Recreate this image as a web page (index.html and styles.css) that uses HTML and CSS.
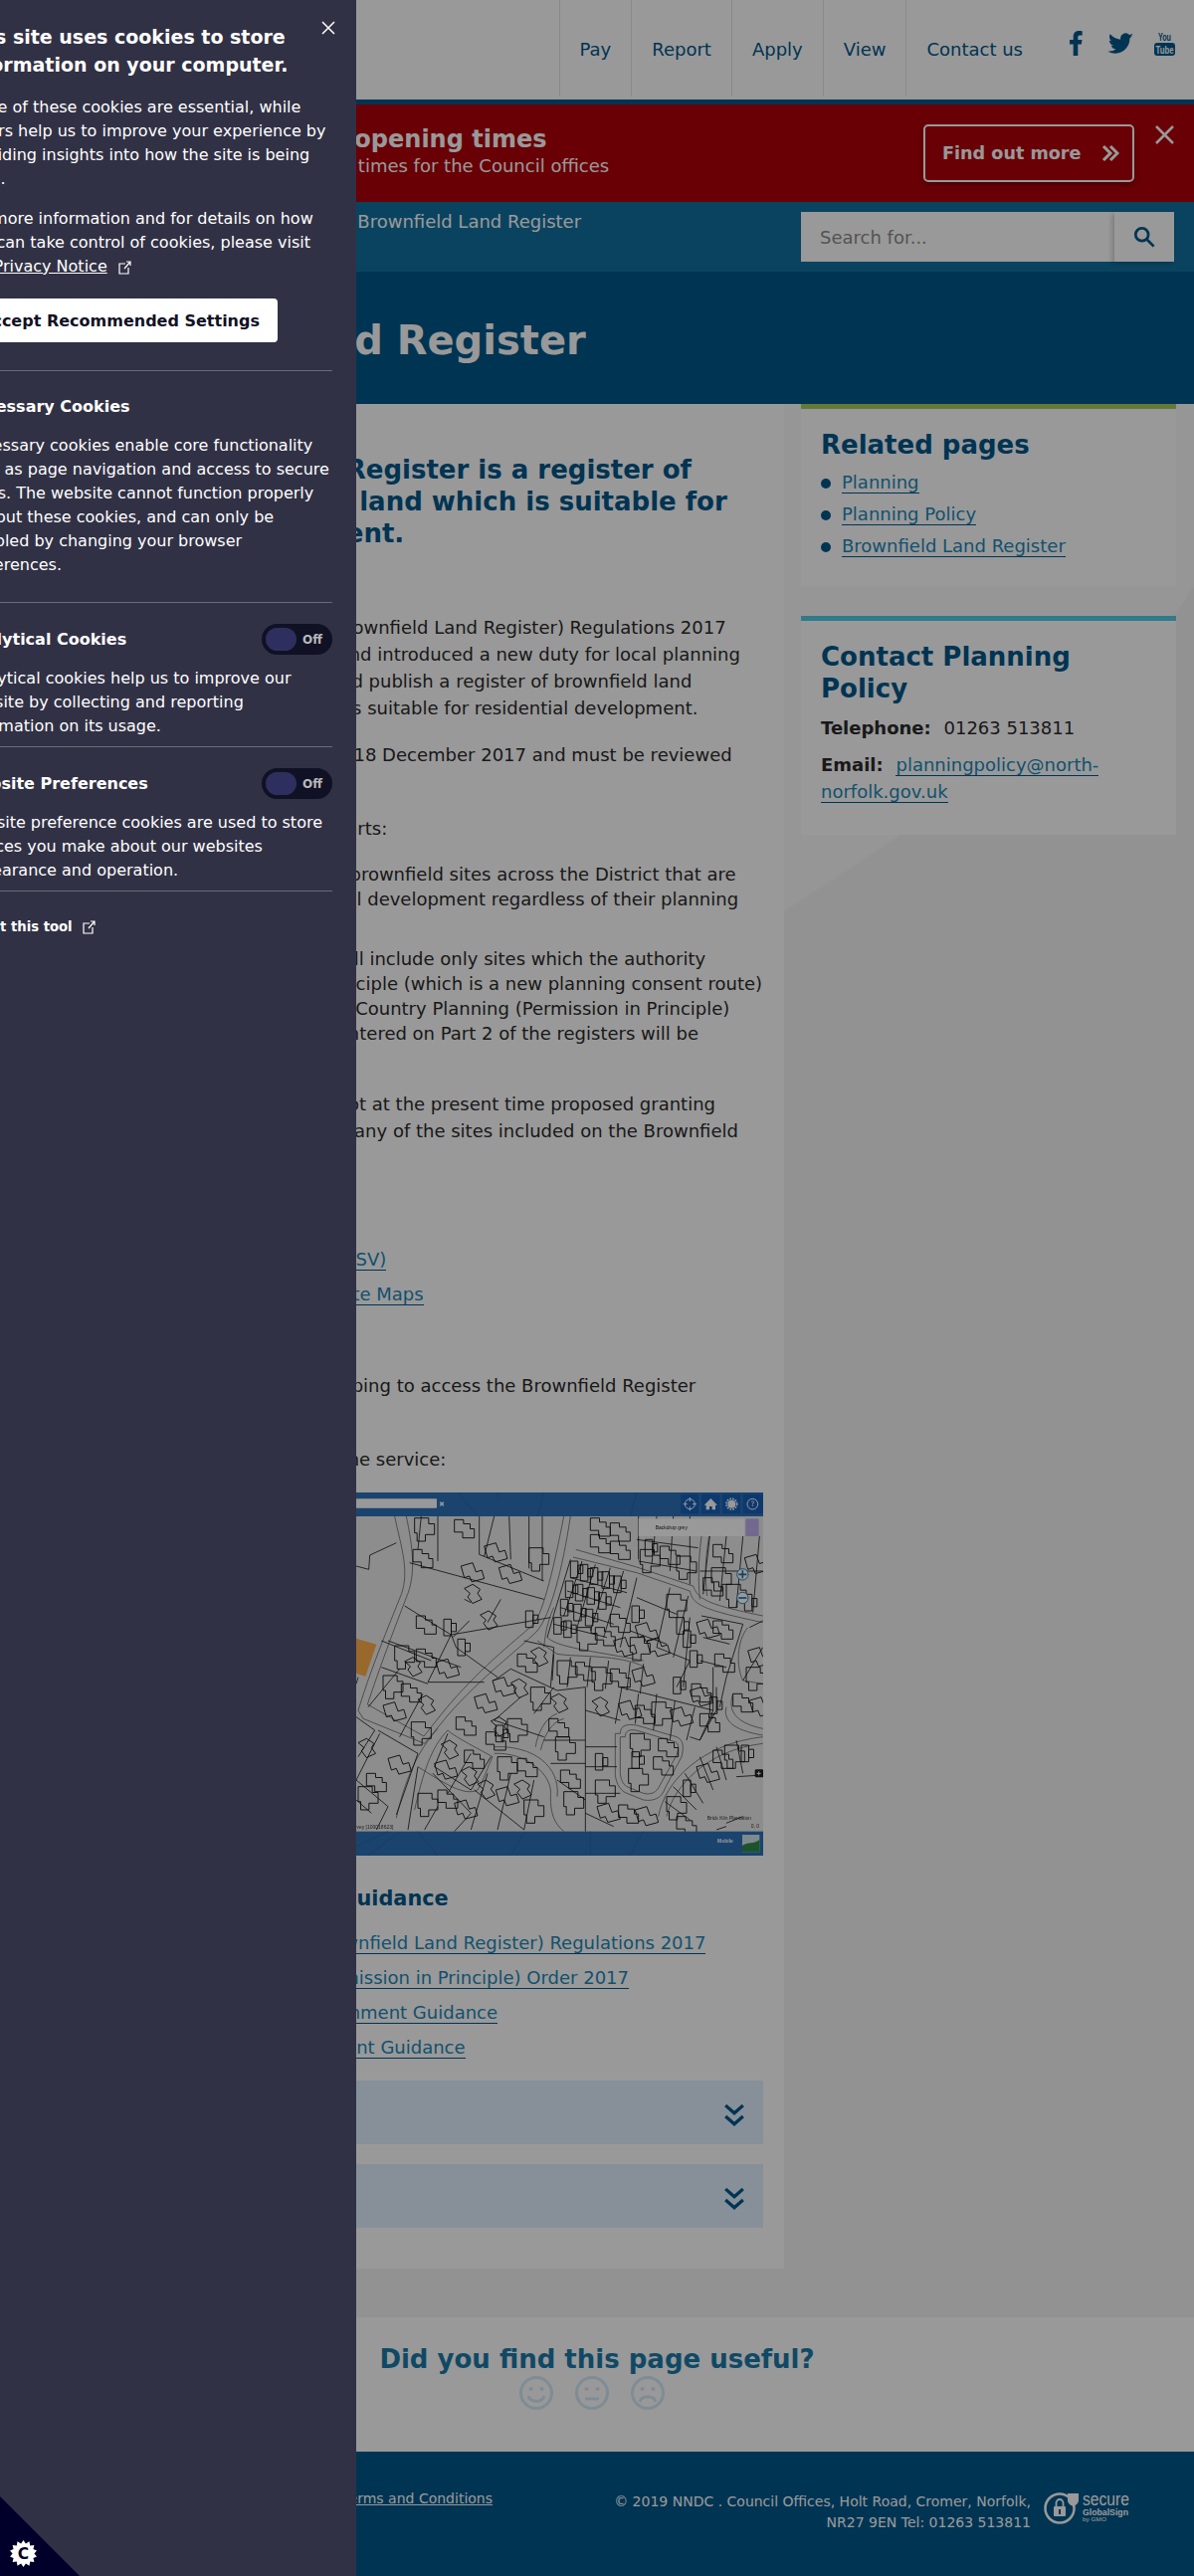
FILE: index.html
```html
<!DOCTYPE html>
<html lang="en">
<head>
<meta charset="utf-8">
<title>Brownfield Land Register</title>
<link rel="stylesheet" href="styles.css">
</head>
<body>
<div class="page">

  <header class="topbar">
    <nav class="topnav">
      <a href="#">Pay</a>
      <a href="#">Report</a>
      <a href="#">Apply</a>
      <a href="#">View</a>
      <a href="#" class="last">Contact us</a>
    </nav>
    <div class="social">
      <svg class="icon-fb" viewBox="0 0 13 25"><path d="M3.7 25V13.6H0V9h3.7V6C3.7 2 6 0 9.200 0c1.600 0 3 .1 3.500.2v4.400h-2.300c-1.800 0-2.100.9-2.100 2.100V9h4.200l-.6 4.600H8.300V25z"/></svg>
      <svg class="icon-tw" viewBox="0 0 24 20"><path d="M23.950 2.570a10 10 0 0 1-2.820.78 4.960 4.960 0 0 0 2.160-2.720c-.95.550-2 .960-3.130 1.180a4.920 4.920 0 0 0-8.380 4.480C7.690 6.100 4.070 4.130 1.640 1.160a4.820 4.820 0 0 0-.67 2.480c0 1.710.87 3.210 2.190 4.100a4.900 4.900 0 0 1-2.230-.62v.06a4.920 4.920 0 0 0 3.950 4.830 5 5 0 0 1-2.210.08 4.940 4.940 0 0 0 4.600 3.420A9.870 9.870 0 0 1 .16 17.610c-.39 0-.78-.02-1.170-.07a14 14 0 0 0 7.560 2.210c9.050 0 14-7.500 14-13.990 0-.21 0-.42-.02-.63a9.940 9.940 0 0 0 2.470-2.540z"/></svg>
      <svg class="icon-yt" viewBox="0 0 21 25">
        <text x="10.500" y="9.500" text-anchor="middle" textLength="13" lengthAdjust="spacingAndGlyphs" class="yt-you">You</text>
        <rect x="0" y="12" width="21" height="13" rx="3"/>
        <text x="10.500" y="22.500" text-anchor="middle" textLength="18" lengthAdjust="spacingAndGlyphs" class="yt-tube">Tube</text>
      </svg>
    </div>
  </header>

  <section class="alert">
    <div class="alert-text">
      <h2>Christmas opening times</h2>
      <p>Holiday opening times for the Council offices</p>
    </div>
    <a href="#" class="alert-btn">Find out more
      <svg viewBox="0 0 18 18"><path d="M2 2l7 7-7 7M9 2l7 7-7 7"/></svg>
    </a>
    <svg class="alert-close" viewBox="0 0 19 19"><path d="M1 1l17 17M18 1L1 18"/></svg>
  </section>

  <div class="crumbs">
    <div class="crumb-links">Home &gt; Planning &gt; Planning Policy &gt; Brownfield Land Register</div>
    <div class="search">
      <span class="search-ph">Search for...</span>
      <span class="search-btn">
        <svg viewBox="0 0 24 24"><circle cx="9.500" cy="9.500" r="7"/><path d="M15 15l7.500 7.500"/></svg>
      </span>
    </div>
  </div>

  <div class="titleband">
    <h1>Brownfield Land Register</h1>
  </div>

  <div class="columns">
    <main class="article">
      <h2 class="lead">The Brownfield Land Register is a register of<br>previously developed land which is suitable for<br>residential development.</h2>

      <p>The Town and Country Planning (Brownfield Land Register) Regulations 2017<br>came into force on 16 April 2017 and introduced a new duty for local planning<br>authorities to prepare, maintain and publish a register of brownfield land<br>site which the authority considers is suitable for residential development.</p>
      <p>The register was first published on 18 December 2017 and must be reviewed<br>at least once a year.</p>
      <p>This register itself splits into two parts:</p>
      <ul class="parts">
        <li>Part 1 of the register lists all the brownfield sites across the District that are<br>deemed as suitable for residential development regardless of their planning<br>status; and</li>
        <li>Part 2 of the optional registers will include only sites which the authority<br>will be granted permission in principle (which is a new planning consent route)<br>in accordance with the Town and Country Planning (Permission in Principle)<br>Order 2017. All sites which are entered on Part 2 of the registers will be<br>granted permission.</li>
      </ul>
      <p>The Council has confirmed it has not at the present time proposed granting<br>Permission in Principle in regard to any of the sites included on the Brownfield<br>Land Register.</p>

      <h3 class="sub">The Register</h3>
      <p class="linkline"><a href="#">2018-9 Brownfield Land Register (CSV)</a></p>
      <p class="linkline"><a href="#">2018-9 Brownfield Land Register Site Maps</a></p>

      <h3 class="sub">Online Map</h3>
      <p>The Council today uses online mapping to access the Brownfield Register<br>data.</p>
      <p>Please see below a screenshot of the service:</p>

      <svg class="mapshot" viewBox="-906 33 2187 1095">
        <defs>
          <path id="h1" transform="scale(1.25)" d="M0 0h34v14h14v26H26v16H6V36H0z"/>
          <path id="h2" transform="scale(1.25)" d="M0 8L28 0l8 22 14-4 6 20-30 8-6-14-12 4z"/>
          <path id="h3" transform="scale(1.25)" d="M0 0h22v10h16v12h10v22H20V30H0z"/>
          <path id="h4" transform="scale(1.25)" d="M0 0h18v40h-18zM18 10h12v20H18z"/>
          <path id="h5" transform="scale(1.25)" d="M0 10L20 0l18 12-6 10 10 14-22 10L8 30l6-8z"/>
        </defs>
        <rect class="map-bg" x="-906" y="33" width="2187" height="1095"/>
        <!-- roads -->
        <path class="map-road" d="M170 105C190 200 215 270 190 340C150 440 100 560 60 690L75 715L260 790L330 705C430 590 540 510 600 450C640 400 675 270 700 105M205 105C225 200 235 280 205 350C170 440 125 560 88 672L258 768L320 690C420 570 520 490 590 430C620 385 650 260 680 105"/>
        <path class="map-road" d="M230 990C255 880 280 800 330 750C350 770 440 815 465 830C450 860 440 900 420 930C380 950 320 910 240 860M175 1015C200 900 240 810 300 745M600 480L660 520C720 530 850 520 925 560M620 500C625 440 640 400 650 380M630 470C660 500 760 510 920 540"/>
        <path class="map-road" d="M708 228L900 275L1060 330C1070 370 1090 385 1280 425M716 205L900 258L1070 315C1085 355 1110 370 1280 405M1095 165C1085 240 1085 300 1090 355M1118 165C1105 240 1105 290 1112 345"/>
        <path class="map-road" d="M470 820C560 815 650 880 640 950C640 1000 650 1030 680 1055M470 800C590 795 670 860 660 950M595 800C600 760 625 710 660 700M610 810C620 770 640 725 680 715"/>
        <path class="map-road" d="M850 760C850 735 870 730 900 735L1020 770C1045 780 1040 810 1035 830L985 925C975 955 950 965 920 960L870 940C845 930 835 900 835 880V760zM865 770C865 750 880 745 905 752L1015 785C1030 790 1025 810 1020 825L970 915C960 940 940 945 920 940L875 922C855 915 850 890 850 875V770z"/>
        <path class="map-road" d="M965 1010C985 900 1100 790 1280 770M990 1010C1010 920 1110 810 1280 790M1170 680C1160 720 1190 750 1280 765M1190 640C1170 700 1210 730 1280 745M1235 440C1200 480 1200 560 1220 600L1280 610"/>
        <!-- plot boundaries -->
        <path class="map-plot" d="M54 255L92 265L95 222L175 185M215 245L620 355M300 105V240M425 105V220L620 300M515 105L520 235M575 105V262M250 105L240 205M200 375L340 462L640 410M340 462L270 605L440 605M150 480L370 560M130 560L270 610M90 680L185 565M185 770L255 640M395 420L345 470M490 355L450 425M615 105V300M470 105L440 225M380 355L400 365M54 710L110 750L60 830M125 760L54 900M120 750L240 820L175 1005M54 900L150 980L115 1050M54 960L100 1000M330 760L290 860L400 930L460 830M400 820L330 940M240 860L210 1050M285 880L400 1000L350 1055M300 980L260 1050M450 880L400 1050M410 930L560 1050M520 880L480 1050M590 900L560 1050M745 620L660 630L520 565L470 600M745 620V1055M745 690L850 720M745 800H840M745 860H840M745 940H850M745 1000L830 1040M620 780H745M640 850H745M660 900L745 960M470 720L620 770M550 650L470 720M650 620L590 700M855 620L835 730M905 640L895 730M960 640L950 750M1015 660L1000 780M1075 680L1050 780M850 620L1130 690L1090 780L1060 770M1090 780L1140 690V620M1130 560V690"/>
        <path class="map-plot" d="M700 235L650 400L630 470M735 240L680 405M775 250L720 440M820 260L760 450M860 270L800 470M900 290L850 500M700 290L870 335M690 330L850 380M670 380L830 430M650 430L810 470M905 105V235M960 105L945 250M1010 105L1000 270M1060 105V310M900 175L1085 200M905 240L1080 270M1000 320L960 500L1060 540L1020 620M1055 345L1010 530M900 350L1020 400M880 450L990 490M1090 270H1280M1120 165L1100 340M1170 165L1150 360M1220 165L1200 380M1270 165L1250 395M1095 405L1220 430L1170 590L1150 680M1060 410L1040 620M1100 470L1180 490M1090 540L1170 560M1130 700L1110 740M1240 440L1280 420M1220 600L1280 500M1200 780L1220 880M1140 800L1170 900M1090 830L1130 930M1045 880L1100 970M1010 920L1080 990M985 965L1060 1020M1200 890L1280 885M1170 1030L1220 1010M1140 1050L1170 1040"/>
        <path class="map-plot" d="M60 590L54 610M130 480L280 540M340 460L355 500L480 590M560 480L650 500L640 620M650 520L645 600M700 530L690 620M760 530L750 620M815 540L805 625M880 545L870 630M920 550L910 640"/>
        <!-- houses -->
        <g class="map-house">
          <use href="#h1" x="230" y="110"/><use href="#h3" x="350" y="115"/><use href="#h2" x="440" y="185"/><use href="#h1" x="575" y="200"/><use href="#h3" x="225" y="205"/>
          <use href="#h2" x="484" y="250"/><use href="#h5" x="380" y="310"/><use href="#h3" x="235" y="405"/><use href="#h4" x="318" y="415"/><use href="#h5" x="428" y="390"/><use href="#h4" x="565" y="390"/><use href="#h2" x="370" y="245"/>
          <use href="#h1" x="170" y="495"/><use href="#h3" x="235" y="505"/><use href="#h5" x="200" y="530"/><use href="#h2" x="295" y="535"/><use href="#h4" x="360" y="475"/><use href="#h1" x="135" y="585"/><use href="#h3" x="190" y="610"/><use href="#h5" x="240" y="645"/><use href="#h2" x="135" y="665"/><use href="#h1" x="220" y="725"/>
          <use href="#h5" x="60" y="775"/><use href="#h3" x="85" y="880"/><use href="#h2" x="150" y="825"/><use href="#h1" x="60" y="920"/><use href="#h5" x="310" y="780"/><use href="#h3" x="380" y="810"/><use href="#h2" x="290" y="840"/><use href="#h5" x="370" y="860"/><use href="#h1" x="240" y="940"/><use href="#h3" x="300" y="930"/><use href="#h2" x="350" y="960"/><use href="#h5" x="420" y="900"/><use href="#h1" x="480" y="830"/><use href="#h3" x="540" y="835"/><use href="#h2" x="475" y="920"/><use href="#h5" x="530" y="900"/><use href="#h1" x="560" y="960"/>
          <use href="#h3" x="540" y="520"/><use href="#h5" x="580" y="500"/><use href="#h2" x="465" y="590"/><use href="#h5" x="520" y="595"/><use href="#h1" x="580" y="620"/><use href="#h5" x="640" y="640"/><use href="#h2" x="410" y="640"/><use href="#h3" x="355" y="710"/><use href="#h5" x="460" y="710"/><use href="#h1" x="510" y="715"/><use href="#h3" x="445" y="755"/><use href="#h4" x="475" y="735"/>
          <use href="#h3" x="635" y="715"/><use href="#h1" x="655" y="770"/><use href="#h3" x="670" y="870"/><use href="#h1" x="680" y="935"/><use href="#h2" x="780" y="970"/><use href="#h3" x="845" y="975"/><use href="#h4" x="775" y="820"/><use href="#h1" x="775" y="900"/><use href="#h5" x="765" y="650"/><use href="#h2" x="895" y="980"/>
          <use href="#h1" x="880" y="760"/><use href="#h3" x="965" y="775"/><use href="#h4" x="885" y="815"/><use href="#h1" x="875" y="865"/><use href="#h3" x="950" y="830"/>
          <use href="#h2" x="845" y="660"/><use href="#h3" x="895" y="675"/><use href="#h1" x="945" y="665"/><use href="#h2" x="1000" y="680"/><use href="#h3" x="1090" y="700"/><use href="#h4" x="1120" y="650"/><use href="#h2" x="1060" y="620"/>
          <use href="#h3" x="1130" y="810"/><use href="#h2" x="1080" y="850"/><use href="#h4" x="1040" y="900"/><use href="#h1" x="1165" y="795"/><use href="#h4" x="1215" y="795"/><use href="#h1" x="990" y="950"/><use href="#h3" x="1020" y="1010"/>
          <use href="#h1" x="660" y="540"/><use href="#h3" x="715" y="545"/><use href="#h1" x="765" y="560"/><use href="#h3" x="820" y="565"/><use href="#h2" x="885" y="560"/><use href="#h4" x="1010" y="590"/><use href="#h3" x="1065" y="610"/>
          <use href="#h4" x="650" y="410"/><use href="#h4" x="680" y="420"/><use href="#h1" x="720" y="440"/><use href="#h3" x="775" y="440"/><use href="#h2" x="830" y="470"/><use href="#h1" x="880" y="470"/><use href="#h2" x="895" y="425"/><use href="#h3" x="820" y="400"/><use href="#h4" x="885" y="375"/>
          <use href="#h4" x="700" y="240"/><use href="#h4" x="730" y="250"/><use href="#h4" x="760" y="260"/><use href="#h4" x="795" y="272"/><use href="#h4" x="830" y="285"/><use href="#h4" x="685" y="300"/><use href="#h4" x="715" y="310"/><use href="#h4" x="750" y="320"/><use href="#h4" x="785" y="335"/><use href="#h4" x="670" y="355"/><use href="#h4" x="710" y="370"/><use href="#h4" x="745" y="385"/><use href="#h3" x="760" y="110"/><use href="#h3" x="760" y="160"/><use href="#h3" x="820" y="125"/><use href="#h3" x="820" y="180"/>
          <use href="#h1" x="910" y="205"/><use href="#h3" x="970" y="195"/><use href="#h1" x="1020" y="225"/><use href="#h4" x="925" y="175"/><use href="#h3" x="1130" y="190"/><use href="#h1" x="1125" y="260"/><use href="#h3" x="1100" y="290"/><use href="#h1" x="1170" y="310"/><use href="#h2" x="1225" y="220"/><use href="#h4" x="1225" y="340"/>
          <use href="#h2" x="1080" y="415"/><use href="#h3" x="1130" y="420"/><use href="#h4" x="1060" y="510"/><use href="#h3" x="1135" y="520"/><use href="#h2" x="1235" y="500"/><use href="#h1" x="1230" y="560"/><use href="#h3" x="1190" y="640"/><use href="#h2" x="1240" y="650"/>
          <use href="#h1" x="990" y="340"/><use href="#h4" x="1020" y="410"/><use href="#h4" x="1040" y="450"/><use href="#h2" x="930" y="470"/>
        </g>
        <polygon class="map-site" points="54,473 115,491 82,588 54,578"/>
        <!-- top bar -->
        <rect class="map-bar" x="-906" y="33" width="2187" height="72"/>
        <rect class="map-input" x="-300" y="52" width="597" height="28" rx="3"/>
        <text class="map-x" x="312" y="74">&#10006;</text>
        <g class="map-tools">
          <rect x="1033" y="38" width="54" height="59"/><rect x="1095" y="38" width="55" height="59"/><rect x="1158" y="38" width="55" height="59"/><rect x="1220" y="38" width="60" height="59"/>
        </g>
        <g class="map-tool-icons">
          <circle cx="1060" cy="68" r="15"/><path d="M1060 48v12M1060 76v12M1040 68h12M1068 68h12"/>
          <circle cx="1249" cy="68" r="16"/>
        </g>
        <path class="map-solid" d="M1103 71l20-20 20 20h-6v14h-10v-10h-8v10h-10V71z"/>
        <circle class="map-solid" cx="1186" cy="68" r="12"/><circle class="map-gear" cx="1186" cy="68" r="16"/>
        <text class="map-help" x="1249" y="76" text-anchor="middle">?</text>
        <rect class="map-label" x="905" y="112" width="320" height="53"/>
        <text class="map-labeltxt" x="956" y="143">Backdrop grey</text>
        <rect class="map-layers" x="1228" y="112" width="40" height="53"/>
        <circle class="map-zoom" cx="1219" cy="280" r="17"/><path class="map-zoomline" d="M1207 280h24M1219 268v24"/>
        <circle class="map-zoom" cx="1219" cy="351" r="17"/><path class="map-zoomline" d="M1207 351h24"/>
        <rect class="map-corner" x="1256" y="868" width="26" height="24" rx="4"/>
        <path class="map-cornerx" d="M1262 880h12M1268 874v12"/>
        <text class="map-small" x="1112" y="1020">Brick Kiln Plantation</text>
        <text class="map-small" x="1244" y="1044">0, 0</text>
        <text class="map-small" x="-200" y="1046">Crown Copyright [2018] Ordnance Survey [100018623]</text>
        <!-- bottom bar -->
        <rect class="map-bar" x="-906" y="1055" width="2187" height="73"/>
        <path class="map-barlines" d="M54 1100L150 1055M90 1128L180 1060M240 1055L300 1128M520 1128L560 1060M760 1128V1055M880 1128L920 1055M360 33L420 105M620 33L600 105M900 33L880 105M480 33V50"/>
        <text class="map-mobile" x="1143" y="1090">Mobile</text>
        <rect class="map-thumb" x="1218" y="1065" width="52" height="52"/>
        <path class="map-thumbsea" d="M1218 1098C1235 1085 1250 1095 1270 1080V1117H1218z"/>
      </svg>

      <h3 class="sub guidance">Brownfield Land Register Guidance</h3>
      <p class="guide"><a href="#">Town and Country Planning (Brownfield Land Register) Regulations 2017</a></p>
      <p class="guide"><a href="#">Town and Country Planning (Permission in Principle) Order 2017</a></p>
      <p class="guide"><a href="#">Brownfield Land Registers Government Guidance</a></p>
      <p class="guide"><a href="#">Permission in Principle Government Guidance</a></p>

      <div class="accordion"><span>Part 1</span><svg viewBox="0 0 18 20"><path d="M1 1l8 7 8-7M1 11l8 7 8-7"/></svg></div>
      <div class="accordion"><span>Part 2</span><svg viewBox="0 0 18 20"><path d="M1 1l8 7 8-7M1 11l8 7 8-7"/></svg></div>
    </main>

    <aside class="sidebar">
      <div class="card card-green">
        <h3>Related pages</h3>
        <ul class="related">
          <li><a href="#">Planning</a></li>
          <li><a href="#">Planning Policy</a></li>
          <li><a href="#">Brownfield Land Register</a></li>
        </ul>
      </div>
      <div class="card card-teal">
        <h3>Contact Planning Policy</h3>
        <p class="tel"><b>Telephone:</b> 01263 513811</p>
        <p class="mail"><b>Email:</b> <a href="#">planningpolicy@north-norfolk.gov.uk</a></p>
      </div>
    </aside>
  </div>

  <section class="feedback">
    <h2>Did you find this page useful?</h2>
    <div class="faces">
      <svg viewBox="0 0 34 34"><circle cx="17" cy="17" r="15.500"/><circle class="eye" cx="11.500" cy="13" r="2"/><circle class="eye" cx="22.500" cy="13" r="2"/><path d="M9 20c2 7 14 7 16 0"/></svg>
      <svg viewBox="0 0 34 34"><circle cx="17" cy="17" r="15.500"/><circle class="eye" cx="11.500" cy="13" r="2"/><circle class="eye" cx="22.500" cy="13" r="2"/><path d="M10 23h14"/></svg>
      <svg viewBox="0 0 34 34"><circle cx="17" cy="17" r="15.500"/><circle class="eye" cx="11.500" cy="13" r="2"/><circle class="eye" cx="22.500" cy="13" r="2"/><path d="M9 26c2-7 14-7 16 0"/></svg>
    </div>
  </section>

  <footer class="footer">
    <a href="#" class="foot-terms">Privacy Policy and Terms and Conditions</a>
    <p class="foot-copy">&copy; 2019 NNDC . Council Offices, Holt Road, Cromer, Norfolk,<br>NR27 9EN Tel: 01263 513811</p>
    <svg class="foot-logo" viewBox="0 0 86 34">
      <circle class="gs-ring" cx="16" cy="17" r="14.500"/>
      <path class="gs-shackle" d="M12.500 15v-3.500a3.500 3.500 0 0 1 7 0V15"/>
      <rect class="gs-lock" x="10" y="15" width="12" height="10" rx="1"/>
      <rect class="gs-key" x="15" y="18" width="2" height="5"/>
      <path class="gs-shield" d="M24 2h11v7c0 3-3 5-5.500 6C27 14 24 12 24 9z"/>
      <text class="gs-secure" x="39" y="14" textLength="47" lengthAdjust="spacingAndGlyphs">secure</text>
      <text class="gs-sign" x="39" y="24" textLength="46" lengthAdjust="spacingAndGlyphs">GlobalSign</text>
      <text class="gs-gmo" x="39" y="30" textLength="24" lengthAdjust="spacingAndGlyphs">by GMO</text>
    </svg>
  </footer>

  <div class="dim"></div>

  <aside class="cookie">
    <svg class="cookie-close" viewBox="0 0 14 14"><path d="M1 1l12 12M13 1L1 13"/></svg>
    <h2>This site uses cookies to store information on your computer.</h2>
    <p class="intro">Some of these cookies are essential, while others help us to improve your experience by providing insights into how the site is being used.</p>
    <p>For more information and for details on how you can take control of cookies, please visit our <a href="#">Privacy Notice</a>
      <svg class="ext" viewBox="0 0 13 14"><path d="M7 3H1v10h9V7M6 8l6-7M8 1h4v4"/></svg>
    </p>
    <button class="accept">Accept Recommended Settings</button>
    <hr class="first">
    <h3 class="plain">Necessary Cookies</h3>
    <p class="desc">Necessary cookies enable core functionality such as page navigation and access to secure areas. The website cannot function properly without these cookies, and can only be disabled by changing your browser preferences.</p>
    <hr class="gap">
    <div class="toggle-row">
      <h3>Analytical Cookies</h3>
      <span class="toggle"><i></i>Off</span>
    </div>
    <p class="desc">Analytical cookies help us to improve our website by collecting and reporting information on its usage.</p>
    <hr>
    <div class="toggle-row">
      <h3>Website Preferences</h3>
      <span class="toggle"><i></i>Off</span>
    </div>
    <p class="desc">Website preference cookies are used to store choices you make about our websites appearance and operation.</p>
    <hr>
    <a href="#" class="about">About this tool
      <svg class="ext" viewBox="0 0 13 14"><path d="M7 3H1v10h9V7M6 8l6-7M8 1h4v4"/></svg>
    </a>
  </aside>

  <div class="cookie-corner">
    <svg viewBox="0 0 28 28"><polygon points="14,0 16.500,3.600 20.200,1.400 21,5.700 25.300,5.200 24.300,9.400 28,11 25.300,14 28,17 24.300,18.600 25.300,22.800 21,22.300 20.200,26.600 16.500,24.400 14,28 11.500,24.400 7.800,26.600 7,22.300 2.700,22.800 3.700,18.600 0,17 2.700,14 0,11 3.700,9.400 2.700,5.200 7,5.700 7.800,1.400 11.500,3.600"/><text x="14" y="19.500" text-anchor="middle">C</text></svg>
  </div>
</div>
</body>
</html>
```

FILE: styles.css
```css
* {
  box-sizing: border-box;
}

html, body {
  margin: 0;
  padding: 0;
}

body {
  font-family: "DejaVu Sans", sans-serif;
  font-size: 18px;
  line-height: 27px;
  color: #2b2b2b;
  background: #f3f3f3;
}

a {
  color: #1d87b8;
  text-decoration: none;
}

h1, h2, h3, p, ul {
  margin: 0;
  padding: 0;
}

.page {
  position: relative;
  width: 1200px;
  height: 2589px;
  overflow: hidden;
}

/* top bar */
.topbar {
  display: flex;
  justify-content: flex-end;
  height: 105px;
  background: #fff;
  border-bottom: 5px solid #00578a;
}

.topnav {
  display: flex;
  height: 97px;
}

.topnav a {
  display: flex;
  align-items: center;
  padding: 2px 20px 0 20px;
  color: #00578a;
  border-left: 1px solid #e4e4e4;
}

.social {
  display: flex;
  align-items: flex-start;
  margin-left: 27px;
  padding-right: 19px;
}

.social svg {
  fill: #00578a;
}

.icon-fb {
  width: 13px;
  height: 25px;
  margin: 31px 26px 0 0;
}

.icon-tw {
  width: 25px;
  height: 21px;
  margin: 33px 21px 0 0;
}

.icon-yt {
  width: 21px;
  height: 25px;
  margin-top: 31px;
}

.yt-you {
  font: bold 11px "Liberation Sans", sans-serif;
}

.yt-tube {
  font: bold 11px "Liberation Sans", sans-serif;
  fill: #fff;
}

/* alert */
.alert {
  display: flex;
  height: 98px;
  padding-left: 212px;
  background: #af000a;
  color: #fff;
}

.alert-text {
  flex: 1;
  padding-top: 20px;
}

.alert-text h2 {
  font-size: 24px;
  line-height: 30px;
}

.alert-text p {
  margin-left: -4px;
  line-height: 24px;
}

.alert-btn {
  display: flex;
  align-items: center;
  justify-content: space-between;
  width: 212px;
  height: 58px;
  margin-top: 20px;
  padding: 0 13px 0 17px;
  color: #fff;
  font-size: 17.6px;
  font-weight: bold;
  border: 2px solid #fff;
  border-radius: 5px;
  box-shadow: 0 3px 6px rgba(0, 0, 0, .3);
}

.alert-btn svg {
  width: 18px;
  height: 18px;
  fill: none;
  stroke: #fff;
  stroke-width: 3;
}

.alert-close {
  width: 19px;
  height: 19px;
  margin: 21px 20px 0 21px;
  fill: none;
  stroke: #fff;
  stroke-width: 2.500;
}

/* breadcrumb and search */
.crumbs {
  display: flex;
  justify-content: space-between;
  height: 70px;
  padding: 10px 20px 0 14px;
  background: #1171a0;
}

.crumb-links {
  color: #fff;
  line-height: 20px;
}

.search {
  display: flex;
  justify-content: space-between;
  width: 375px;
  height: 50px;
  background: #fff;
}

.search-ph {
  padding: 12px 0 0 19px;
  color: #8c8c8c;
}

.search-btn {
  display: flex;
  align-items: center;
  justify-content: center;
  width: 60px;
  background: #fff;
  box-shadow: -2px 2px 5px rgba(0, 0, 0, .22);
}

.search-btn svg {
  width: 22px;
  height: 24px;
  fill: none;
  stroke: #00578a;
  stroke-width: 3;
}

/* title */
.titleband {
  height: 163px;
  padding: 44px 0 0 19px;
  background: #00578a;
}

.titleband h1 {
  font-size: 40px;
  line-height: 50px;
  color: #fff;
}

/* columns */
.columns {
  position: relative;
  display: flex;
  align-items: flex-start;
  height: 1923px;
  margin-top: -30px;
}

.columns::before {
  content: "";
  position: absolute;
  left: 788px;
  top: 0;
  width: 412px;
  height: 510px;
  background: #fbfbfb;
  clip-path: polygon(0 0, 100% 0, 100% 183px, 393px 211px, 117px 433px, 0 510px);
}

.article {
  position: relative;
  width: 788px;
  height: 1874px;
  padding: 50px 21px 0 38px;
  background: #fff;
  white-space: nowrap;
}

.article p {
  margin-bottom: 20px;
}

.lead {
  margin-bottom: 65px;
  font-size: 26px;
  line-height: 32px;
  color: #00578a;
}

.parts {
  list-style: none;
  padding-left: 18px;
  margin-bottom: 20px;
  line-height: 25px;
}

.parts li {
  margin-bottom: 10px;
}

.parts li:last-child {
  margin-bottom: 0;
}

.article .sub {
  font-size: 20.8px;
  line-height: 32px;
  margin-bottom: 23px;
  color: #00578a;
}

.article .linkline {
  margin-bottom: 8px;
}

.article a {
  border-bottom: 1px solid #00578a;
}

.linkline + .sub {
  margin-top: 16px;
  margin-bottom: 17px;
}

.mapshot {
  display: block;
  width: 729px;
  height: 365px;
  filter: blur(.5px);
}

.map-bg {
  fill: #ececec;
}

.map-road {
  fill: none;
  stroke: #666;
  stroke-width: 2.400;
}

.map-plot {
  fill: none;
  stroke: #111;
  stroke-width: 2.400;
}

.map-house {
  fill: none;
  stroke: #111;
  stroke-width: 2.200;
}

.map-site {
  fill: #ffae4a;
}

.map-bar {
  fill: #2c72b8;
}

.map-barlines {
  fill: none;
  stroke: #1f62a2;
  stroke-width: 2;
}

.map-input {
  fill: #fff;
}

.map-x {
  font: 20px "DejaVu Sans", sans-serif;
  fill: #fff;
  text-anchor: middle;
}

.map-tools rect {
  fill: #1660b8;
}

.map-tool-icons {
  fill: none;
  stroke: #fff;
  stroke-width: 3;
}

.map-solid {
  fill: #fff;
}

.map-gear {
  fill: none;
  stroke: #fff;
  stroke-width: 5;
  stroke-dasharray: 5 3.400;
}

.map-help {
  font: 22px "DejaVu Sans", sans-serif;
  fill: #fff;
}

.map-label {
  fill: #fff;
}

.map-labeltxt {
  font: 15px "Liberation Sans", sans-serif;
  fill: #222;
}

.map-layers {
  fill: #bdaff0;
}

.map-zoom {
  fill: #fff;
  stroke: #2a83b8;
  stroke-width: 3;
}

.map-zoomline {
  fill: none;
  stroke: #1f6ea8;
  stroke-width: 5;
}

.map-corner {
  fill: #222;
}

.map-cornerx {
  fill: none;
  stroke: #fff;
  stroke-width: 3;
}

.map-small {
  font: 15px "Liberation Sans", sans-serif;
  fill: #333;
}

.map-mobile {
  font: bold 15px "Liberation Sans", sans-serif;
  fill: #fff;
}

.map-thumb {
  fill: #d6e4ee;
}

.map-thumbsea {
  fill: #2f8a4a;
}

.article .sub.guidance {
  margin: 27px 0 15px 0;
}

.article .guide {
  margin-bottom: 8px;
  padding-left: 19px;
}

.article .guide:last-of-type {
  margin-bottom: 20px;
}

.accordion {
  display: flex;
  align-items: center;
  justify-content: space-between;
  height: 64px;
  margin-bottom: 20px;
  padding: 6px 19px 0 20px;
  background: #e1f0ff;
}

.accordion svg {
  width: 20px;
  height: 22px;
  fill: none;
  stroke: #00578a;
  stroke-width: 3;
}

.accordion span {
  color: #00578a;
  font-weight: bold;
}

/* sidebar */
.sidebar {
  position: relative;
  width: 377px;
  margin-left: 17px;
}

.card {
  padding: 0 20px;
  background: #fff;
}

.card h3 {
  font-size: 26px;
  line-height: 32px;
  color: #00578a;
}

.card-green {
  height: 183px;
  padding-top: 20px;
  border-top: 5px solid #a8cc60;
  margin-bottom: 30px;
}

.related {
  list-style: none;
  margin-top: 8px;
}

.related li {
  position: relative;
  padding-left: 21px;
  margin-bottom: 5px;
}

.related li::before {
  content: "";
  position: absolute;
  left: 0;
  top: 10px;
  width: 10px;
  height: 10px;
  border-radius: 50%;
  background: #00578a;
}

.related a, .mail a {
  border-bottom: 1px solid #00578a;
}

.card-teal {
  height: 220px;
  padding-top: 20px;
  border-top: 5px solid #50cbe8;
}

.tel {
  margin-top: 10px;
}

.mail {
  margin-top: 10px;
}

.card b {
  margin-right: 7px;
}

/* feedback and footer */
.feedback {
  height: 135px;
  padding-top: 26px;
  background: #fff;
  text-align: center;
}

.feedback h2 {
  font-size: 26px;
  line-height: 32px;
  color: #1c7ba8;
}

.faces {
  display: flex;
  justify-content: center;
  gap: 22px;
  padding-right: 10px;
  margin-top: 1px;
}

.faces svg {
  width: 34px;
  height: 34px;
  fill: none;
  stroke: #d4eaf8;
  stroke-width: 3;
}

.faces .eye {
  fill: #d4eaf8;
  stroke: none;
}

.footer {
  position: relative;
  display: flex;
  justify-content: flex-end;
  height: 125px;
  padding: 40px 65px 0 0;
  background: #00578a;
  color: #fff;
}

.foot-terms {
  position: absolute;
  left: 0;
  top: 37px;
  width: 495px;
  text-align: right;
  font-size: 14px;
  line-height: 20px;
  color: #fff;
  text-decoration: underline;
}

.foot-copy {
  font-size: 14px;
  line-height: 21px;
  text-align: right;
}

.foot-logo {
  width: 86px;
  height: 34px;
  margin: 0 0 0 13px;
}

.gs-ring {
  fill: none;
  stroke: #fff;
  stroke-width: 2.500;
}

.gs-lock, .gs-shield {
  fill: #fff;
}

.gs-key {
  fill: #00578a;
}

.gs-shackle {
  fill: none;
  stroke: #fff;
  stroke-width: 1.800;
}

.gs-secure {
  font: 18px "Liberation Sans", sans-serif;
  fill: #fff;
}

.gs-sign {
  font: bold 9.500px "Liberation Sans", sans-serif;
  fill: #fff;
}

.gs-gmo {
  font: 4.500px "Liberation Sans", sans-serif;
  fill: #fff;
}

/* dim layer and cookie panel */
.dim {
  position: absolute;
  left: 0;
  top: 0;
  right: 0;
  bottom: 0;
  background: rgba(0, 0, 0, .4);
}

.cookie {
  position: absolute;
  left: -62px;
  top: 0;
  bottom: 0;
  width: 420px;
  padding: 23px 24px 0 24px;
  background: #313145;
  color: #fff;
  font-size: 16px;
  line-height: 24px;
}

.cookie-close {
  position: absolute;
  right: 21px;
  top: 21px;
  width: 14px;
  height: 14px;
  fill: none;
  stroke: #fff;
  stroke-width: 1.500;
}

.cookie h2 {
  width: 345px;
  font-size: 19px;
  line-height: 28px;
  margin-bottom: 17px;
}

.cookie .intro {
  margin-bottom: 16px;
}

.cookie a {
  color: #fff;
  text-decoration: underline;
}

.ext {
  width: 13px;
  height: 14px;
  margin: 0 0 -3px 6px;
  fill: none;
  stroke: #fff;
  stroke-width: 1.200;
}

.accept {
  display: block;
  width: 317px;
  height: 44px;
  margin-top: 20px;
  padding: 0;
  font: bold 16px "DejaVu Sans", sans-serif;
  color: #111125;
  background: #fff;
  border: 0;
  border-radius: 4px;
}

.cookie hr {
  height: 1px;
  margin: 8px 0 0 0;
  border: 0;
  background: #6a6a7a;
}

.cookie hr.first {
  margin-top: 28px;
}

.cookie hr.gap {
  margin-top: 25px;
}

.cookie h3 {
  font-size: 16px;
  line-height: 24px;
}

.plain {
  margin-top: 24px;
}

.desc {
  margin-top: 15px;
}

.toggle-row {
  display: flex;
  justify-content: space-between;
  align-items: center;
  margin-top: 21px;
}

.toggle-row + .desc {
  margin-top: 12px;
}

.toggle {
  display: flex;
  align-items: center;
  gap: 6px;
  width: 71px;
  height: 31px;
  padding-left: 4px;
  border-radius: 16px;
  background: #111125;
  font-size: 12px;
  font-weight: bold;
  color: #b8b8b8;
}

.toggle i {
  width: 31px;
  height: 23px;
  border-radius: 12px;
  background: #2f2f5f;
}

.about {
  display: block;
  margin-top: 24px;
  font-size: 13.200px;
  font-weight: bold;
  text-decoration: none !important;
}

.cookie-corner {
  position: absolute;
  left: 0;
  bottom: 0;
  width: 80px;
  height: 80px;
  background: #00002a;
  clip-path: polygon(0 0, 100% 100%, 0 100%);
}

.cookie-corner svg {
  position: absolute;
  left: 10px;
  top: 44px;
  width: 27px;
  height: 27px;
  fill: #fff;
}

.cookie-corner text {
  font: bold 16px "DejaVu Sans", sans-serif;
  fill: #00002a;
}
```
